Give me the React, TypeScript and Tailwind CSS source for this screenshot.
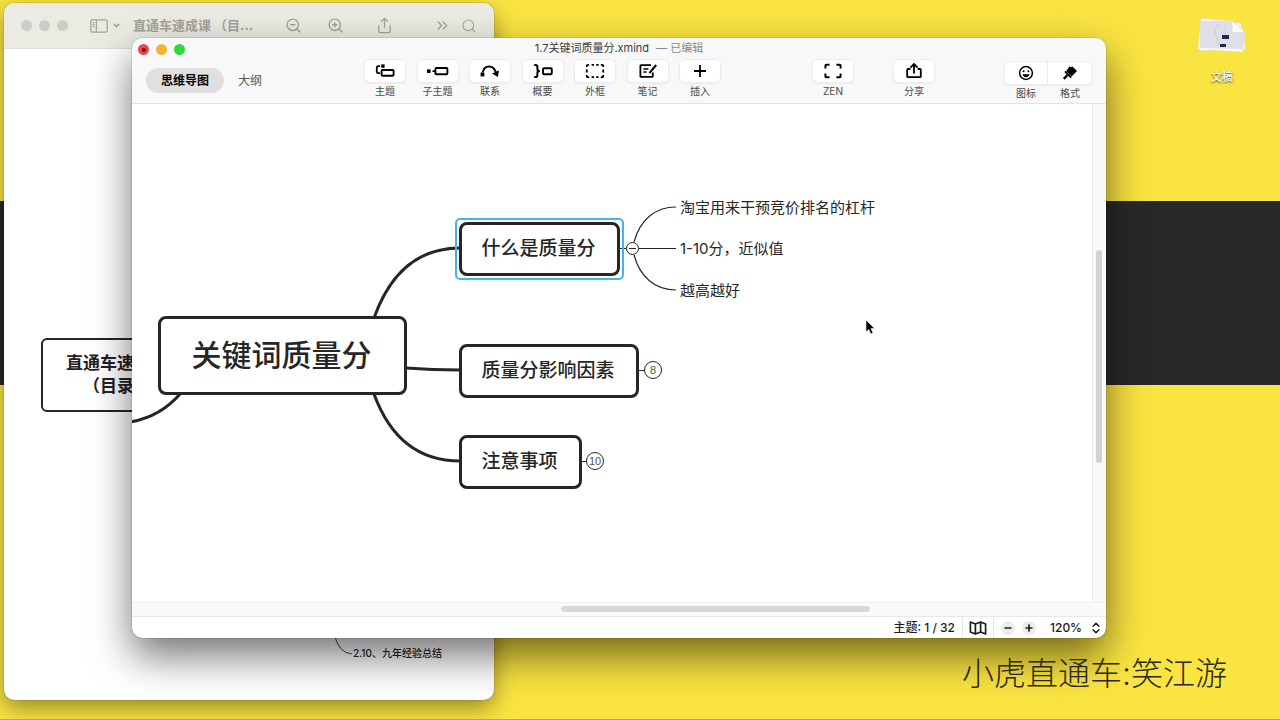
import type { ReactNode } from 'react';
import { ChevronDown, ChevronsRight, ChevronsUpDown, Minus, Plus, Search, Share, ZoomIn, ZoomOut } from 'lucide-react';

const iconProps = { width: 20, height: 20, viewBox: '0 0 20 20', fill: 'none', stroke: 'currentColor', strokeWidth: 2 };

const TopicIcon = () => (
    <svg {...iconProps}>
        <path d="M5 5.2H3.2Q1.8 5.2 1.8 6.6V10.8Q1.8 12.2 3.2 12.2H5" strokeWidth="1.8" />
        <rect x="6.2" y="3.4" width="3.4" height="3.4" fill="currentColor" stroke="none" />
        <rect x="6.6" y="9" width="12" height="5.8" rx="1" strokeWidth="1.9" />
    </svg>
);

const SubtopicIcon = () => (
    <svg {...iconProps} className="overflow-visible">
        <rect x="-1" y="8.4" width="3.6" height="3.6" fill="currentColor" stroke="none" />
        <path d="M4.5 10.2H7.4" strokeWidth="1.8" />
        <rect x="7.4" y="7" width="12" height="6.2" rx="1" strokeWidth="1.9" />
    </svg>
);

const RelationIcon = () => (
    <svg {...iconProps}>
        <rect x="0.6" y="11.6" width="3.8" height="3.8" fill="currentColor" stroke="none" />
        <path d="M2.6 11.6C4.4 3.6 13 3.6 16 11.4" strokeWidth="2" />
        <path d="M12 12.4L19 9.6L17.8 16Z" fill="currentColor" stroke="none" />
    </svg>
);

const SummaryIcon = () => (
    <svg {...iconProps}>
        <path d="M1.2 4H2.4Q4.4 4 4.4 5.8V8.2Q4.4 10 6.8 10Q4.4 10 4.4 11.8V14.2Q4.4 16 2.4 16H1.2" strokeWidth="2" />
        <rect x="10" y="7.2" width="8.8" height="6" rx="1" strokeWidth="1.9" />
    </svg>
);

const BoundaryIcon = () => (
    <svg {...iconProps}>
        <path
            d="M1.8 6V4.8Q1.8 3.8 2.8 3.8H4.2M6.6 3.8H9M11.2 3.8H13.6M15.8 3.8H17.2Q18.2 3.8 18.2 4.8V6M18.2 8.4V11.6M18.2 14V15.2Q18.2 16.2 17.2 16.2H15.8M13.6 16.2H11.2M9 16.2H6.6M4.2 16.2H2.8Q1.8 16.2 1.8 15.2V14M1.8 11.6V8.4"
            strokeWidth="1.8"
        />
    </svg>
);

const NoteIcon = () => (
    <svg {...iconProps}>
        <path d="M13 4.2H3Q2.4 4.2 2.4 4.8V15.2Q2.4 15.8 3 15.8H14Q14.8 15.8 14.8 15.2V11.4" strokeWidth="1.8" />
        <path d="M5.4 8H10.4M5.4 11H8.6" strokeWidth="1.6" />
        <path d="M18.2 4L11.4 12.2" strokeWidth="2" />
    </svg>
);

const ZenIcon = () => (
    <svg {...iconProps}>
        <path d="M2.4 7.4V4.8Q2.4 3.8 3.4 3.8H6.6M13.4 3.8H16.6Q17.6 3.8 17.6 4.8V7.4M17.6 12.6V15.2Q17.6 16.2 16.6 16.2H13.4M6.6 16.2H3.4Q2.4 16.2 2.4 15.2V12.6" />
    </svg>
);

const ExportIcon = () => (
    <svg {...iconProps}>
        <path d="M6.4 8H4Q3.2 8 3.2 8.8V15.4Q3.2 16.2 4 16.2H16Q16.8 16.2 16.8 15.4V8.8Q16.8 8 16 8H13.6" strokeWidth="1.8" />
        <path d="M10 12.4V3.4M6.4 6.6L10 3L13.6 6.6" strokeWidth="1.8" />
    </svg>
);

const SmileIcon = () => (
    <svg {...iconProps}>
        <circle cx="10" cy="10" r="6.4" strokeWidth="1.5" />
        <circle cx="7.6" cy="8.2" r="1" fill="currentColor" stroke="none" />
        <circle cx="12.4" cy="8.2" r="1" fill="currentColor" stroke="none" />
        <path d="M6.6 11.2H13.4Q12.8 14.2 10 14.2Q7.2 14.2 6.6 11.2Z" fill="currentColor" stroke="none" />
    </svg>
);

const BrushIcon = () => (
    <svg {...iconProps}>
        <path d="M9.4 3.6L11.2 4.2L12.4 3.4L17 8L11.6 13.4L6.2 8Z" fill="currentColor" stroke="none" />
        <path d="M5 8.4L11.2 14.6" strokeWidth="1.8" />
        <path d="M7.4 12.2L3.8 15.8" strokeWidth="2.4" />
    </svg>
);

const PlusIcon = () => (
    <svg {...iconProps}>
        <path d="M10 4V16M4 10H16" strokeWidth="1.8" />
    </svg>
);

const FoldedMapIcon = () => (
    <svg width="18" height="16" viewBox="0 0 18 16" fill="none" stroke="currentColor" strokeWidth="1.7" strokeLinejoin="round">
        <path d="M1.4 2L6.4 4L11.6 2L16.6 4V14L11.6 12L6.4 14L1.4 12ZM6.4 4V14M11.6 2V12" />
    </svg>
);

const tools = [
    { label: '主题', icon: <TopicIcon /> },
    { label: '子主题', icon: <SubtopicIcon /> },
    { label: '联系', icon: <RelationIcon /> },
    { label: '概要', icon: <SummaryIcon /> },
    { label: '外框', icon: <BoundaryIcon /> },
    { label: '笔记', icon: <NoteIcon /> },
    { label: '插入', icon: <PlusIcon /> },
];

const ToolButton = ({ label, icon }: { label: string; icon: ReactNode }) => (
    <button className="flex w-[42px] flex-col items-center text-black">
        <span className="flex h-6 w-full items-center justify-center rounded-[5px] border border-[#ececec] bg-white shadow-xs">
            {icon}
        </span>
        <span className="text-[10px] leading-4 whitespace-nowrap text-[#4a4a4a]">{label}</span>
    </button>
);

const PreviewWindow = () => (
    <section className="absolute top-[3px] bottom-[19px] left-1 flex w-[490px] flex-col overflow-hidden rounded-[10px] bg-white shadow-[0_0_1px_rgba(0,0,0,0.7),0_8px_22px_rgba(0,0,0,0.4)]">
        <header className="flex h-[46px] shrink-0 items-center border-b border-[#dededa] bg-[#ebebe4] px-[17px] text-[#a3a39c]">
            <div className="flex gap-[7px]">
                <span className="size-[11px] rounded-full bg-[#cdcdc7]" />
                <span className="size-[11px] rounded-full bg-[#cdcdc7]" />
                <span className="size-[11px] rounded-full bg-[#cdcdc7]" />
            </div>
            <button aria-label="边栏" className="ml-[22px] flex items-center gap-1">
                <svg width="18" height="14" viewBox="0 0 18 14" fill="none" stroke="currentColor" strokeWidth="1.3">
                    <rect x="0.8" y="0.8" width="16.4" height="12.4" rx="1.4" />
                    <path d="M6.4 1V13M2.6 3.6H4.6M2.6 5.6H4.6M2.6 7.6H4.6" />
                </svg>
                <ChevronDown size={9} strokeWidth={4} />
            </button>
            <h2 className="ml-3 w-[130px] text-[13px] font-bold whitespace-nowrap">直通车速成课 （目...</h2>
            <button aria-label="缩小" className="ml-[22px]"><ZoomOut size={17} strokeWidth={2} /></button>
            <button aria-label="放大" className="ml-[25px]"><ZoomIn size={17} strokeWidth={2} /></button>
            <button aria-label="共享" className="ml-8"><Share size={17} strokeWidth={1.8} /></button>
            <button aria-label="更多" className="ml-auto"><ChevronsRight size={17} strokeWidth={2} /></button>
            <button aria-label="搜索" className="ml-2.5"><Search size={16} strokeWidth={1.6} /></button>
        </header>
        <div className="relative flex-1 text-[#222]">
            <div className="absolute top-[289px] left-[37px] flex h-[74px] w-[152px] items-center justify-center rounded-md border-2 border-[#262626] text-center text-[17px] leading-[23px] font-bold">
                <p>直通车速成课<br />（目录）</p>
            </div>
            <svg className="absolute bottom-[39px] left-[328px]" width="22" height="30" viewBox="0 0 22 30" fill="none" stroke="#444">
                <path d="M2 2Q6 22 20 23" />
            </svg>
            <p className="absolute bottom-[39px] left-[349px] text-[10px] leading-4 font-medium whitespace-nowrap">2.10、九年经验总结</p>
        </div>
    </section>
);

const MindMap = () => (
    <div className="relative min-w-0 flex-1 overflow-hidden bg-white text-[#262626]">
        <svg className="absolute inset-0 h-full w-full" fill="none" stroke="#262626">
            <g strokeWidth="3">
                <path d="M242 214C257 172 284 144 328 144" />
                <path d="M274 264Q300 266 328 266" />
                <path d="M242 290C257 331 284 357 328 357" />
                <path d="M48 290Q28 313 -2 318" />
            </g>
            <g strokeWidth="1.2">
                <path d="M488 144.500H544" />
                <path d="M502 138C508 116 523 103 544 103" />
                <path d="M502 151C508 173 523 186 544 186" />
                <path d="M506 266.500H514M448 357.500H456" />
            </g>
        </svg>

        <div className="absolute top-[212px] left-[26px] flex h-[79px] w-[249px] items-center justify-center rounded-lg border-3 border-[#262626] bg-white pr-0.5 text-[30px] font-medium">
            关键词质量分
        </div>
        <div className="absolute top-[114px] left-[323px] rounded-[5px] border-2 border-[#42b4ec] p-0.5">
            <div className="flex h-[54px] w-[161px] items-center justify-center rounded-lg border-3 border-[#262626] bg-white pr-0.5 text-[19px] font-medium">
                什么是质量分
            </div>
        </div>
        <div className="absolute top-[240px] left-[327px] flex h-[54px] w-[180px] items-center justify-center rounded-lg border-3 border-[#262626] bg-white pr-0.5 text-[19px] font-medium">
            质量分影响因素
        </div>
        <div className="absolute top-[331px] left-[327px] flex h-[54px] w-[123px] items-center justify-center rounded-lg border-3 border-[#262626] bg-white pr-0.5 text-[19px] font-medium">
            注意事项
        </div>

        <button aria-label="收起" className="absolute top-[138px] left-[494px] flex size-[13px] items-center justify-center rounded-full border border-[#262626] bg-white">
            <span className="h-px w-[7px] bg-[#262626]" />
        </button>
        <button className="absolute top-[257px] left-[512px] flex size-[18px] items-center justify-center rounded-full border border-[#262626] bg-white font-['Liberation_Sans',sans-serif] text-[11px] text-[#555]">
            8
        </button>
        <button className="absolute top-[348px] left-[454px] flex size-[18px] items-center justify-center rounded-full border border-[#262626] bg-white font-['Liberation_Sans',sans-serif] text-[11px] text-[#555]">
            10
        </button>

        <p className="absolute top-[94px] left-[548px] text-[15px] leading-5 whitespace-nowrap">淘宝用来干预竞价排名的杠杆</p>
        <p className="absolute top-[135px] left-[548px] text-[15px] leading-5 whitespace-nowrap">1-10分，近似值</p>
        <p className="absolute top-[177px] left-[548px] text-[15px] leading-5 whitespace-nowrap">越高越好</p>

        <svg className="absolute top-[215px] left-[733px]" width="12" height="18" viewBox="0 0 12 18">
            <path d="M1 1V13L3.800 10.400L5.800 15L8 14L6 9.600H9.600Z" fill="#000" stroke="#fff" strokeWidth="0.600" />
        </svg>
    </div>
);

const XmindWindow = () => (
    <section className="absolute top-[38px] right-[174px] bottom-[81px] left-[132px] flex flex-col overflow-hidden rounded-[10px] bg-white shadow-[0_0_1px_rgba(0,0,0,0.8),0_18px_40px_rgba(0,0,0,0.55)]">
        <header className="h-[66px] shrink-0 border-b border-[#e4e4e4] bg-[#f8f8f8]">
            <div className="grid h-[21px] grid-cols-[1fr_auto_1fr] items-center px-1.5">
                <div className="flex gap-[7px] pt-0.5">
                    <button aria-label="关闭" className="flex size-[11px] items-center justify-center rounded-full bg-[#ec4650]">
                        <span className="size-1 rounded-full bg-[#6d0710]" />
                    </button>
                    <button aria-label="最小化" className="size-[11px] rounded-full bg-[#f7b32d]" />
                    <button aria-label="缩放" className="size-[11px] rounded-full bg-[#2fd83c]" />
                </div>
                <h1 className="pb-0.5 text-[11px] leading-4 text-[#3c3c3c]">
                    1.7关键词质量分.xmind <span className="ml-1 text-[#888]">— 已编辑</span>
                </h1>
            </div>
            <div className="flex items-start px-[14px]">
                <nav className="mt-[9px] flex w-[218px] items-center text-xs">
                    <button className="h-[25px] rounded-full bg-[#e0e0e0] px-[15px] font-bold text-black">思维导图</button>
                    <button className="px-[14px] text-[#5a5a5a]">大纲</button>
                </nav>
                <div className="flex w-[357px] justify-between">
                    {tools.map((tool) => (
                        <ToolButton key={tool.label} {...tool} />
                    ))}
                </div>
                <div className="ml-auto flex items-start">
                    <ToolButton label="ZEN" icon={<ZenIcon />} />
                    <div className="ml-[39px]">
                        <ToolButton label="分享" icon={<ExportIcon />} />
                    </div>
                    <div className="mt-0.5 ml-[69px] flex text-[10px] leading-4 text-[#4a4a4a]">
                        <button className="flex w-11 flex-col items-center">
                            <span className="flex h-6 w-full items-center justify-center rounded-l-[5px] border border-[#ececec] bg-white text-black shadow-xs">
                                <SmileIcon />
                            </span>
                            <span>图标</span>
                        </button>
                        <button className="flex w-11 flex-col items-center">
                            <span className="flex h-6 w-full items-center justify-center rounded-r-[5px] border border-l-0 border-[#ececec] bg-white text-black shadow-xs">
                                <BrushIcon />
                            </span>
                            <span>格式</span>
                        </button>
                    </div>
                </div>
            </div>
        </header>

        <div className="flex min-h-0 flex-1">
            <MindMap />
            <div className="w-[14px] border-l border-[#ececec] bg-[#fafafa] pt-[146px] pl-[3px]">
                <div className="h-[213px] w-1.5 rounded-full bg-[#d2d2d2]" />
            </div>
        </div>
        <div className="h-[14px] shrink-0 border-t border-[#f0f0f0] bg-[#fafafa] pt-[3px] pl-[429px]">
            <div className="h-1.5 w-[309px] rounded-full bg-[#d8d8d8]" />
        </div>

        <footer className="flex h-[22px] shrink-0 items-center justify-end border-t border-[#e8e8e8] pr-[5px] text-xs font-medium text-[#1c1c1c]">
            <span className="pr-[7px]">主题: 1 / 32</span>
            <button aria-label="导航图" className="flex h-full w-8 items-center justify-center border-x border-[#e4e4e4]">
                <FoldedMapIcon />
            </button>
            <button aria-label="缩小" className="ml-[7px] flex size-[14px] items-center justify-center rounded-full bg-[#ececec]">
                <Minus size={10} strokeWidth={4} />
            </button>
            <button aria-label="放大" className="ml-[7px] flex size-[14px] items-center justify-center rounded-full bg-[#ececec]">
                <Plus size={10} strokeWidth={4} />
            </button>
            <div className="ml-[14px] flex items-center gap-[7px]">
                <select aria-label="缩放比例" className="w-[34px] appearance-none bg-transparent">
                    <option>120%</option>
                </select>
                <ChevronsUpDown size={14} strokeWidth={2.6} className="pointer-events-none -mx-0.5" />
            </div>
        </footer>
    </section>
);

const DesktopFolder = () => (
    <div className="absolute top-4 right-[30px] flex w-14 flex-col items-center">
        <svg width="50" height="38" viewBox="0 0 50 38">
            <path d="M4 2L44 7L49 33L3 35Z" fill="#f6f6f6" stroke="#d9d3a0" strokeWidth="0.600" />
            <path d="M1 33L4 3L34 5L48 17L46 36Z" fill="#f7f7f4" />
            <path d="M3 5H36L48 17L46 33L3 32Z" fill="#dfdfe7" />
            <path d="M34 4L48 16L35 17Q36 10 34 4Z" fill="#fbfbfb" stroke="#d0d0d4" strokeWidth="0.600" />
            <path d="M22 8Q16 14 19 20T22 30M28 10Q30 14 27 18" fill="none" stroke="#d8cccd" />
            <rect x="25" y="19" width="7" height="4" fill="#1e2b50" />
            <rect x="23" y="28" width="6" height="3" fill="#1e2b50" />
        </svg>
        <span className="mt-[15px] text-[11px] leading-4 font-medium text-white [text-shadow:0_1px_2px_rgba(0,0,0,0.7)]">文稿</span>
    </div>
);

export default function App() {
    return (
        <main className="relative h-screen min-h-[600px] w-full overflow-hidden border-b border-[#b9a93a] bg-[#fae441] font-[Inter,'Noto_Sans_CJK_SC',sans-serif]">
            <div className="mt-[201px] h-[184px] bg-[#282828]" />
            <DesktopFolder />
            <PreviewWindow />
            <XmindWindow />
            <p className="absolute right-[53px] bottom-[21px] text-[32px] leading-[48px] font-light text-[#2a2713]">小虎直通车:笑江游</p>
        </main>
    );
}
